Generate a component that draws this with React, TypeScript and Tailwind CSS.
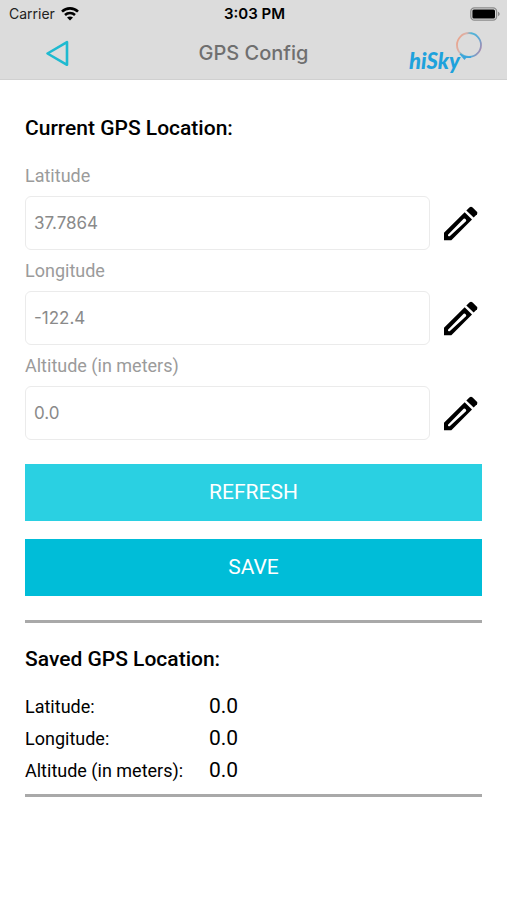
import { useState } from "react";

type Field = {
  id: string;
  label: string;
  value: string;
};

const FIELDS: Field[] = [
  { id: "latitude", label: "Latitude", value: "37.7864" },
  { id: "longitude", label: "Longitude", value: "-122.4" },
  { id: "altitude", label: "Altitude (in meters)", value: "0.0" },
];

function WifiIcon() {
  return (
    <svg className="h-[14px] w-[18px]" viewBox="0 0 18 14" fill="none" aria-hidden="true">
      <path d="M1 4.6C5.4.3 12.6.3 17 4.6" stroke="#000" strokeWidth="2.6" />
      <path d="M4 8C6.8 5.3 11.2 5.3 14 8" stroke="#000" strokeWidth="2.5" />
      <path d="M9 13.6 6 10.6C7.7 9.1 10.3 9.1 12 10.6Z" fill="#000" />
    </svg>
  );
}

function BatteryIcon() {
  return (
    <svg className="h-[14px] w-[30px]" viewBox="0 0 30 14" aria-hidden="true">
      <rect x=".8" y=".8" width="25.8" height="12.4" rx="3.6" fill="none" stroke="#8b8b8b" strokeWidth="1.3" />
      <rect x="2.4" y="2.4" width="22.6" height="9.2" rx="1.5" fill="#000" />
      <path d="M28 4.8v4.4c1-.4 1.7-1.2 1.7-2.2S29 5.2 28 4.8Z" fill="#8b8b8b" />
    </svg>
  );
}

function PencilIcon() {
  return (
    <svg className="h-[35px] w-[34px]" viewBox="0 0 102 104" fill="#000" aria-hidden="true">
      <path
        fillRule="evenodd"
        d="M0 80 62 18 84 40 22 102H0ZM12 86Q11 92 17 90L66 45Q68 42 65 39 62 36 59 38Z"
      />
      <path d="M67 13 77 3Q81 0 85 3L98 16Q102 20 99 24L89 34Z" />
    </svg>
  );
}

function Logo() {
  return (
    <svg className="h-[46px] w-[76px]" viewBox="0 0 76 46" role="img" aria-label="hiSky">
      <defs>
        <linearGradient id="ring" x1="0" y1=".3" x2="1" y2=".7">
          <stop offset="0" stopColor="#eba48c" />
          <stop offset=".25" stopColor="#d9b3ac" />
          <stop offset=".42" stopColor="#4fb5d8" />
          <stop offset=".75" stopColor="#5aa9d6" />
          <stop offset="1" stopColor="#a78bb0" />
        </linearGradient>
      </defs>
      <circle cx="62" cy="14" r="12" fill="none" stroke="url(#ring)" strokeWidth="1.8" />
      <path d="M53 23Q57 27 64 26" fill="none" stroke="#3aa5dc" strokeWidth="1.6" />
      <path d="M54 25 60 26 57.5 29Z" fill="#3aa5dc" />
      <text x="2" y="38" fill="#1ea2dc" className="font-['Lato',sans-serif] text-[22px] font-black italic">
        hiSky
      </text>
    </svg>
  );
}

function Header() {
  return (
    <header className="border-b border-[#d0d0d0] bg-[#dcdcdc]">
      <div className="grid h-7 grid-cols-3 items-center pr-[7px] pl-[9px] font-['Inter',sans-serif] text-sm text-black">
        <div className="flex items-center gap-1.5 text-[#222]">
          <span>Carrier</span>
          <WifiIcon />
        </div>
        <span className="text-center text-[15px] font-semibold">3:03 PM</span>
        <div className="flex justify-end">
          <BatteryIcon />
        </div>
      </div>
      <div className="grid h-[51px] grid-cols-3 items-center px-6">
        <div className="flex pl-[21px]">
          <button type="button" aria-label="Back" className="w-6 cursor-pointer">
            <svg className="h-7 w-6" viewBox="0 0 24 28" fill="none" aria-hidden="true">
              <path d="M2.5 13.5 22 2.2V24.8Z" stroke="#1fbad0" strokeWidth="2.6" strokeLinejoin="round" />
            </svg>
          </button>
        </div>
        <h1 className="pb-0.5 text-center font-['Inter',sans-serif] text-xl font-medium whitespace-nowrap text-[#6f6f6f]">
          GPS Config
        </h1>
        <div className="flex justify-end">
          <Logo />
        </div>
      </div>
    </header>
  );
}

export default function App() {
  const [values, setValues] = useState<Record<string, string>>(
    Object.fromEntries(FIELDS.map((field) => [field.id, field.value]))
  );

  return (
    <div className="min-h-screen bg-white font-['Roboto',sans-serif]">
      <Header />
      <main className="px-[25px] pt-8">
        <h2 className="mb-[11px] text-[21px] leading-8 font-medium text-black">Current GPS Location:</h2>

        <form onSubmit={(e) => e.preventDefault()}>
          {FIELDS.map((field) => (
            <div key={field.id} className="pt-[9px]">
              <label htmlFor={field.id} className="mb-2 block text-lg leading-6 text-[#9b9b9b]">
                {field.label}
              </label>
              <div className="flex items-center gap-3.5">
                <input
                  id={field.id}
                  type="text"
                  value={values[field.id]}
                  onChange={(e) => setValues({ ...values, [field.id]: e.target.value })}
                  className="h-[54px] min-w-0 flex-1 rounded-md border border-[#ebebeb] bg-white px-2 font-['Inter',sans-serif] text-[17px] text-[#8a8a8a] focus:outline-none"
                />
                <button type="button" aria-label={`Edit ${field.label}`} className="mr-1 cursor-pointer">
                  <PencilIcon />
                </button>
              </div>
            </div>
          ))}

          <div className="mt-6 flex flex-col gap-[18px]">
            <button type="button" className="h-[57px] cursor-pointer bg-[#2ad0e2] text-[21px] text-white">
              REFRESH
            </button>
            <button type="submit" className="h-[57px] cursor-pointer bg-[#00bdd8] text-[21px] text-white">
              SAVE
            </button>
          </div>
        </form>

        <section className="mt-6 border-y-[3px] border-[#a9a9a9] pt-5 pb-2">
          <h2 className="mb-4 text-[21px] leading-8 font-medium text-black">Saved GPS Location:</h2>
          <dl className="grid grid-cols-[184px_1fr] gap-y-px text-black">
            {FIELDS.map((field) => (
              <div key={field.id} className="col-span-2 grid grid-cols-subgrid items-center">
                <dt className="text-lg leading-[31px]">{field.label}:</dt>
                <dd className="text-[21px] leading-[31px]">0.0</dd>
              </div>
            ))}
          </dl>
        </section>
      </main>
    </div>
  );
}
